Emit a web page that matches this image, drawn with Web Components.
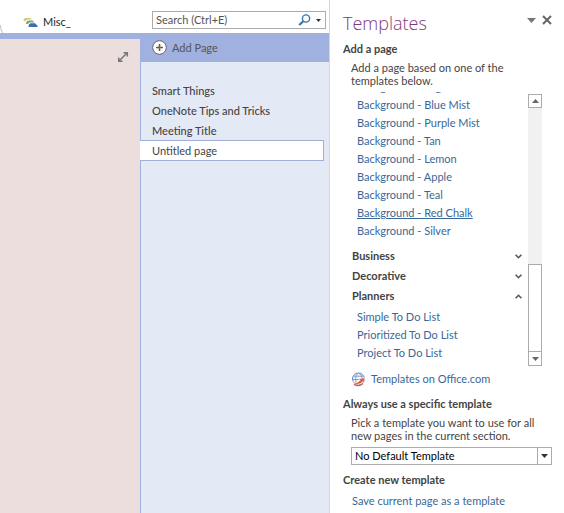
<!DOCTYPE html>
<html lang="en">
<head>
<meta charset="utf-8">
<title>Misc_ - Notebook</title>
<style>
  :root {
    --section: #a0b0df;
    --section-light: #e4e9f6;
    --page: #eddede;
    --text: #444;
    --link: #3a6796;
    --title: #80397b;
    --line: #ababab;
  }

  html, body {
    height: 100%;
    margin: 0;
    background: #fff;
  }

  body {
    font: 11px/18px Lato, "Open Sans", "Liberation Sans", sans-serif;
    color: var(--text);
  }
</style>
</head>
<body>
<note-window>
  <section-tab slot="tab">Misc_</section-tab>
  <search-box slot="search" hint="Search (Ctrl+E)"></search-box>
  <page-list slot="pages">
    <page-item>Smart Things</page-item>
    <page-item>OneNote Tips and Tricks</page-item>
    <page-item>Meeting Title</page-item>
    <page-item selected>Untitled page</page-item>
  </page-list>
  <task-pane slot="pane" heading="Templates">
    <pane-section heading="Add a page">
      <p>Add a page based on one of the templates below.</p>
      <scroll-area>
        <template-link>Background - Sage</template-link>
        <template-link>Background - Blue Mist</template-link>
        <template-link>Background - Purple Mist</template-link>
        <template-link>Background - Tan</template-link>
        <template-link>Background - Lemon</template-link>
        <template-link>Background - Apple</template-link>
        <template-link>Background - Teal</template-link>
        <template-link active>Background - Red Chalk</template-link>
        <template-link>Background - Silver</template-link>
        <template-group heading="Business"></template-group>
        <template-group heading="Decorative"></template-group>
        <template-group heading="Planners" open>
          <template-link>Simple To Do List</template-link>
          <template-link>Prioritized To Do List</template-link>
          <template-link>Project To Do List</template-link>
        </template-group>
      </scroll-area>
      <office-link>Templates on Office.com</office-link>
    </pane-section>
    <pane-section heading="Always use a specific template">
      <p>Pick a template you want to use for all new pages in the current section.</p>
      <template-select label="Default template" value="No Default Template"></template-select>
    </pane-section>
    <pane-section heading="Create new template">
      <template-link flush>Save current page as a template</template-link>
    </pane-section>
  </task-pane>
</note-window>

<script>
/* Base class: puts the markup of static `html` in an open shadow root */
class BaseElement extends HTMLElement {
  constructor() {
    super();
    const template = document.createElement('template');
    template.innerHTML = this.constructor.html;
    this.attachShadow({ mode: 'open' }).append(template.content.cloneNode(true));
  }

  $(selector) {
    return this.shadowRoot.querySelector(selector);
  }
}

/* <note-window>: tab strip, page canvas, page list and task pane */
class NoteWindow extends BaseElement {
  static html = `
    <style>
      :host { display: flex; height: 100%; overflow: hidden; }
      .notebook { flex: 1; min-width: 0; display: flex; flex-direction: column; }
      header {
        display: flex;
        align-items: flex-end;
        justify-content: space-between;
        height: 33px;
      }
      .search { box-sizing: border-box; flex: 0 1 177px; padding: 0 3px 4px 0; }
      .body { flex: 1; display: flex; background: var(--section); }
      main {
        flex: 1;
        margin-top: 6px;
        padding: 11px 11px 0;
        background: var(--page);
        text-align: right;
      }
      .pages { flex: 0 0 189px; display: flex; }
      ::slotted(page-list) { flex: 1; }
      button { padding: 0; border: 0; background: none; }
      svg { display: block; }
    </style>
    <div class="notebook">
      <header>
        <slot name="tab"></slot>
        <div class="search"><slot name="search"></slot></div>
      </header>
      <div class="body">
        <main>
          <button aria-label="Full page view">
            <svg width="12" height="12" viewBox="0 0 12 12" fill="none" stroke="#777" stroke-width="1.5">
              <path d="M2.500 9.500L9.500 2.500M6.500 1.700h3.800v3.800M1.700 6.500v3.800h3.800"/>
            </svg>
          </button>
        </main>
        <div class="pages"><slot name="pages"></slot></div>
      </div>
    </div>
    <slot name="pane"></slot>
  `;
}

/* <section-tab>: the current section with its icon */
class SectionTab extends BaseElement {
  static html = `
    <style>
      :host { display: flex; align-items: center; height: 22px; }
      .edge { align-self: stretch; }
      .icon { margin: 0 5px 0 20px; }
      button {
        display: flex;
        align-items: center;
        padding: 0;
        border: 0;
        background: none;
        font: inherit;
        color: #222;
      }
    </style>
    <svg class="edge" width="3" height="22" viewBox="0 0 3 22" fill="none" stroke="#bbb">
      <path d="M0 14C1 17 1 20 3 22"/>
    </svg>
    <button>
      <svg class="icon" width="15" height="11" viewBox="0 0 15 11" fill="none">
        <path d="M.5 4C.5 2.200 1.500 1 3 1H7.500L9 2.500H4.500C3 2.500 3 4 2.500 4z" fill="#dcc274"/>
        <path d="M3 7C3 5 4 3.500 5.500 3.500H9.500L11.500 5.500H7C5.500 5.500 5.500 7 5 7z" fill="#7fa97d"/>
        <path d="M5.500 10C5.500 7.500 6.500 6.200 8 6.200H12l2.500 2.500V10z" fill="#3a6fb5"/>
      </svg>
      <slot></slot>
    </button>
  `;
}

/* <search-box hint>: search field with magnifier and scope arrow */
class SearchBox extends BaseElement {
  static html = `
    <style>
      :host {
        display: flex;
        align-items: center;
        height: 16px;
        border: 1px solid var(--line);
        background: #fff;
      }
      input {
        flex: 1;
        width: 0;
        height: 16px;
        padding: 0 0 0 3px;
        border: 0;
        outline: 0;
        background: none;
        font: inherit;
        line-height: 16px;
        color: #444;
      }
      input::placeholder { color: #555; opacity: 1; }
      button { display: flex; padding: 0; border: 0; background: none; }
      .scope { margin: 0 4px 0 5px; }
    </style>
    <input type="search">
    <button aria-label="Search">
      <svg width="13" height="12" viewBox="0 0 13 12" fill="none" stroke="#3676ab">
        <circle cx="8" cy="4.5" r="3.6" stroke-width="1.4"/>
        <path d="M5.3 7.2L1.2 11" stroke-width="2.2"/>
      </svg>
    </button>
    <button class="scope" aria-label="Search scope">
      <svg width="5" height="3" viewBox="0 0 5 3"><path d="M0 0h5L2.5 3z" fill="#333"/></svg>
    </button>
  `;

  connectedCallback() {
    const hint = this.getAttribute('hint');
    this.$('input').placeholder = hint;
    this.$('input').setAttribute('aria-label', hint);
  }
}

/* <page-list>: Add Page bar over the pages of the section */
class PageList extends BaseElement {
  static html = `
    <style>
      :host { display: flex; flex-direction: column; }
      button {
        display: flex;
        align-items: center;
        gap: 5px;
        height: 29px;
        padding: 0 12px;
        border: 0;
        background: var(--section);
        font: inherit;
        color: #555;
      }
      nav {
        flex: 1;
        padding-top: 18px;
        background: linear-gradient(var(--section), var(--section)) 0 0 / 1px 100% no-repeat var(--section-light);
      }
    </style>
    <button>
      <svg width="15" height="15" viewBox="0 0 15 15">
        <circle cx="7.5" cy="7.5" r="6.8" fill="#fff" stroke="#666"/>
        <path d="M7.5 4v7M4 7.5h7" stroke="#665f50" stroke-width="1.6"/>
      </svg>
      Add Page
    </button>
    <nav><slot></slot></nav>
  `;
}

/* <page-item selected>: one page title */
class PageItem extends BaseElement {
  static html = `
    <style>
      :host { display: block; margin-right: 5px; }
      a {
        display: block;
        padding: 1px 12px 0;
        border: 1px solid transparent;
        border-width: 1px 1px 0 0;
        font-weight: 500;
        color: #444;
        text-decoration: none;
      }
      :host([selected]) a {
        border-color: #9fb0d6;
        border-bottom-width: 1px;
        background: #fff;
        font-weight: 400;
      }
    </style>
    <a href="#"><slot></slot></a>
  `;
}

/* <task-pane heading>: side pane with menu and close buttons */
class TaskPane extends BaseElement {
  static html = `
    <style>
      :host {
        display: block;
        box-sizing: border-box;
        flex: 0 0 235px;
        padding: 9px 12px 0 13px;
        border-left: 1px solid #d3d7e0;
        background: #fff;
      }
      header { display: flex; align-items: center; height: 28px; margin-bottom: 3px; }
      h1 {
        flex: 1;
        margin: 0;
        font: 300 18px/28px "Open Sans", sans-serif;
        color: var(--title);
      }
      button { display: flex; margin: 0 0 6px 6px; padding: 0; border: 0; background: none; }
    </style>
    <header>
      <h1></h1>
      <button aria-label="Task pane options">
        <svg width="9" height="5" viewBox="0 0 9 5"><path d="M0 0h9L4.5 5z" fill="#777"/></svg>
      </button>
      <button class="close" aria-label="Close">
        <svg width="10" height="10" viewBox="0 0 10 10" stroke="#666" stroke-width="2">
          <path d="M1 1l8 8M9 1L1 9"/>
        </svg>
      </button>
    </header>
    <slot></slot>
  `;

  connectedCallback() {
    this.$('h1').textContent = this.getAttribute('heading');
  }
}

/* <pane-section heading>: bold heading over an indented body */
class PaneSection extends BaseElement {
  static html = `
    <style>
      :host { display: block; margin-bottom: 6px; }
      h2 { margin: 0 0 3px; font-size: 11px; line-height: 18px; font-weight: 700; }
      .body { padding-left: 8px; }
      ::slotted(p) { margin: 0 0 5px; line-height: 13px; }
    </style>
    <h2></h2>
    <div class="body"><slot></slot></div>
  `;

  connectedCallback() {
    this.$('h2').textContent = this.getAttribute('heading');
  }
}

/* <scroll-area>: list scrolled to its end, with its own scroll bar */
class ScrollArea extends BaseElement {
  static html = `
    <style>
      :host { display: flex; height: 274px; margin-right: 10px; }
      .view {
        flex: 1;
        display: flex;
        flex-direction: column;
        justify-content: flex-end;
        overflow: hidden;
        padding-bottom: 4px;
      }
      .bar { display: flex; flex-direction: column; width: 14px; padding-top: 2px; }
      .track { flex: 1; display: flex; flex-direction: column; justify-content: flex-end; background: #f1f1f1; }
      .thumb { height: 88px; box-sizing: border-box; border: 1px solid var(--line); background: #fff; }
      button {
        display: flex;
        align-items: center;
        justify-content: center;
        height: 14px;
        padding: 0;
        border: 1px solid var(--line);
        background: #fff;
      }
      .down { border-top: 0; }
    </style>
    <div class="view"><slot></slot></div>
    <div class="bar">
      <button aria-label="Scroll up">
        <svg width="7" height="4" viewBox="0 0 7 4"><path d="M0 4h7L3.5 0z" fill="#666"/></svg>
      </button>
      <div class="track"><div class="thumb"></div></div>
      <button class="down" aria-label="Scroll down">
        <svg width="7" height="4" viewBox="0 0 7 4"><path d="M0 0h7L3.5 4z" fill="#666"/></svg>
      </button>
    </div>
  `;
}

/* <template-link active flush>: one template */
class TemplateLink extends BaseElement {
  static html = `
    <style>
      :host { display: block; flex: none; padding-left: 6px; }
      :host([flush]) { padding-left: 1px; }
      a { color: var(--link); text-decoration: none; }
      :host([active]) a { text-decoration: underline; }
    </style>
    <a href="#"><slot></slot></a>
  `;
}

/* <template-group heading open>: collapsible category */
class TemplateGroup extends BaseElement {
  static html = `
    <style>
      :host { display: block; flex: none; }
      :host(:first-of-type) { margin-top: 6px; }
      button {
        display: flex;
        align-items: center;
        justify-content: space-between;
        width: 100%;
        height: 20px;
        padding: 0 6px 0 1px;
        border: 0;
        background: none;
        font: inherit;
        font-weight: 700;
        color: inherit;
      }
      .items { display: none; padding-top: 2px; }
      :host([open]) .items { display: block; }
      :host([open]) svg { transform: rotate(180deg); }
    </style>
    <button>
      <span></span>
      <svg width="7" height="5" viewBox="0 0 7 5" fill="none" stroke="#555" stroke-width="1.6">
        <path d="M.6.8L3.5 3.7 6.4.8"/>
      </svg>
    </button>
    <div class="items"><slot></slot></div>
  `;

  connectedCallback() {
    this.$('span').textContent = this.getAttribute('heading');
    this.$('button').setAttribute('aria-expanded', this.hasAttribute('open'));
    this.$('button').addEventListener('click', () => this.toggleAttribute('open'));
  }
}

/* <office-link>: globe icon and online link */
class OfficeLink extends BaseElement {
  static html = `
    <style>
      :host { display: block; padding: 4px 0 1px; }
      a { display: flex; align-items: center; gap: 5px; color: var(--link); text-decoration: none; }
    </style>
    <a href="#">
      <svg width="15" height="15" viewBox="0 0 15 15" fill="none">
        <circle cx="7.5" cy="7" r="6" fill="#f4f8fc" stroke="#5b82ba"/>
        <path d="M7 1.200C4 4 4 9 6 12.500M8 1.200c2 1.500 3 3.500 3 5.300M2.500 4.200h10M1.500 7.500h7" stroke="#7d9dcb"/>
        <path d="M.8 8.500c2 3 6 2.800 8.400-.3L7.800 7l5.700-1.500-.3 5.300-1.500-1.200C9 13 3.500 13.800.8 8.500z" fill="#dc5a30" stroke="#fff" stroke-width=".6"/>
        <path d="M3 12.200c2.500 2 6.500 2 9-.5" stroke="#dc5a30" stroke-width="1.200"/>
      </svg>
      <slot></slot>
    </a>
  `;
}

/* <template-select label value>: drop-down for the default template */
class TemplateSelect extends BaseElement {
  static html = `
    <style>
      :host {
        display: grid;
        grid-template-columns: 1fr 14px;
        height: 16px;
        border: 1px solid var(--line);
        background: #fff;
      }
      select {
        grid-area: 1 / 1 / 2 / 3;
        appearance: none;
        width: 100%;
        padding: 0 16px 0 3px;
        border: 0;
        background: none;
        font: inherit;
        line-height: 16px;
        color: #000;
      }
      .arrow {
        grid-area: 1 / 2;
        display: flex;
        align-items: center;
        justify-content: center;
        border-left: 1px solid var(--line);
        pointer-events: none;
      }
    </style>
    <select><option></option></select>
    <span class="arrow">
      <svg width="7" height="4" viewBox="0 0 7 4"><path d="M0 0h7L3.5 4z" fill="#333"/></svg>
    </span>
  `;

  connectedCallback() {
    this.$('select').setAttribute('aria-label', this.getAttribute('label'));
    this.$('option').textContent = this.getAttribute('value');
  }
}

customElements.define('note-window', NoteWindow);
customElements.define('section-tab', SectionTab);
customElements.define('search-box', SearchBox);
customElements.define('page-list', PageList);
customElements.define('page-item', PageItem);
customElements.define('task-pane', TaskPane);
customElements.define('pane-section', PaneSection);
customElements.define('scroll-area', ScrollArea);
customElements.define('template-link', TemplateLink);
customElements.define('template-group', TemplateGroup);
customElements.define('office-link', OfficeLink);
customElements.define('template-select', TemplateSelect);
</script>
</body>
</html>
